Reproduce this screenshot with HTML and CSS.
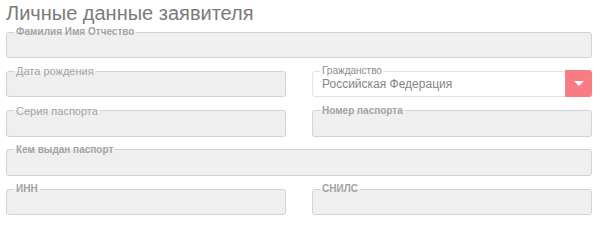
FILE: index.html
```html
<!DOCTYPE html>
<html lang="ru">
<head>
  <meta charset="UTF-8">
  <meta name="viewport" content="width=device-width, initial-scale=1.0">
  <title>Личные данные заявителя</title>
  <link rel="stylesheet" href="styles.css">
</head>
<body>

  <h1>Личные данные заявителя</h1>

  <div class="form-grid">
    <fieldset class="field wide">
      <legend class="bold">Фамилия Имя Отчество</legend>
      <div class="field-body"></div>
    </fieldset>

    <fieldset class="field">
      <legend>Дата рождения</legend>
      <div class="field-body"></div>
    </fieldset>

    <fieldset class="field select">
      <legend class="small">Гражданство</legend>
      <div class="field-body">Российская Федерация</div>
      <button class="select-btn"><span class="caret"></span></button>
    </fieldset>

    <fieldset class="field">
      <legend>Серия паспорта</legend>
      <div class="field-body"></div>
    </fieldset>

    <fieldset class="field">
      <legend class="bold">Номер паспорта</legend>
      <div class="field-body"></div>
    </fieldset>

    <fieldset class="field wide">
      <legend class="bold">Кем выдан паспорт</legend>
      <div class="field-body"></div>
    </fieldset>

    <fieldset class="field">
      <legend class="bold">ИНН</legend>
      <div class="field-body"></div>
    </fieldset>

    <fieldset class="field">
      <legend class="bold">СНИЛС</legend>
      <div class="field-body"></div>
    </fieldset>
  </div>

</body>
</html>
```

FILE: styles.css
```css
* {
  margin: 0;
  padding: 0;
  box-sizing: border-box;
}

body {
  font-family: 'Liberation Sans', Arial, sans-serif;
  background-color: #fff;
  color: #777;
}

h1 {
  font-size: 20px;
  font-weight: normal;
  line-height: 24px;
  color: #7b7b7b;
  padding: 1px 0 0 6px;
  margin-bottom: 2px;
}

.form-grid {
  display: grid;
  grid-template-columns: 280px 280px;
  column-gap: 26px;
  row-gap: 8.25px;
  padding-left: 6px;
}

.field {
  position: relative;
  min-width: 0;
  border: 1px solid #d3d3d3;
  border-radius: 3px;
  background-color: #efefef;
}

.field.wide {
  grid-column: span 2;
}

.field legend {
  margin-left: 7px;
  padding: 0 2px;
  font-size: 11px;
  line-height: 10px;
  color: #a3a3a3;
}

.field legend.bold {
  font-size: 10px;
  font-weight: bold;
}

.field legend.small {
  font-size: 10px;
  color: #8c8c8c;
}

.field-body {
  height: 20px;
}

/* select box */
.field.select {
  background-color: #fff;
  border-color: #e2e2e2;
}

.field.select .field-body {
  padding-left: 9px;
  font-size: 12px;
  line-height: 16px;
  color: #858585;
}

.select-btn {
  position: absolute;
  top: -6px;
  right: -1px;
  width: 27px;
  height: 27px;
  border: none;
  border-radius: 0 3px 3px 0;
  background-color: #f97c84;
  display: flex;
  align-items: center;
  justify-content: center;
}

.caret {
  width: 0;
  height: 0;
  border-left: 5px solid transparent;
  border-right: 5px solid transparent;
  border-top: 5px solid #fff;
}
```
